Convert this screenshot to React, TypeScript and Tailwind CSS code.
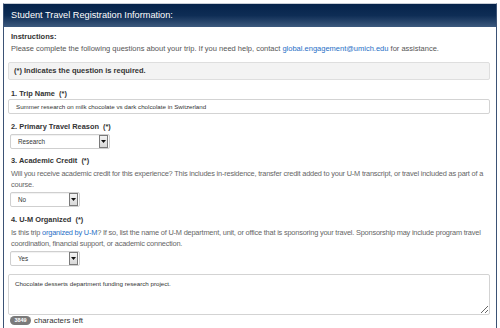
import { FC } from "react";

const font = "font-['Liberation_Sans',Arial,sans-serif]";

const FakeSelect: FC<{ value: string; width: string }> = ({ value, width }) => (
  <div
    className={`ml-[2px] mt-[2px] h-[15px] ${width} flex items-center border border-[#cfcfcf] rounded-[2px] bg-white shadow-[inset_0_1px_1px_rgba(0,0,0,0.06)]`}
  >
    <span className="flex-1 pl-[7px] text-[6.3px] text-[#333]">{value}</span>
    <span className="h-[13px] w-[9px] mr-[1px] flex items-center justify-center border border-[#7a7a7a] bg-gradient-to-b from-[#f4f4f4] to-[#d8d8d8]">
      <svg width="5" height="3" viewBox="0 0 5 3">
        <path d="M0 0 L5 0 L2.5 3 Z" fill="#111" />
      </svg>
    </span>
  </div>
);

const Heading: FC<{ text: string; mt: string }> = ({ text, mt }) => (
  <h3 className={`${mt} pl-[3px] h-[10px] leading-[10px] text-[7.4px] font-bold text-[#333]`}>
    {text}&nbsp;&nbsp;(*)
  </h3>
);

const App: FC = () => {
  return (
    <div className={`w-[500px] h-[328px] overflow-hidden bg-white pt-[3px] px-[3px] ${font}`}>
      <div className="h-full border-x border-[#3b5275] border-t border-t-[#c8ced6]">
        <header className="h-[23px] flex items-center pl-[7px] bg-gradient-to-b from-[#06234a] via-[#0e2d55] to-[#3d5a7e]">
          <h1 className="text-[9.2px] text-white">Student Travel Registration Information:</h1>
        </header>

        <div className="pl-[4px] pr-[6px]">
          <p className="mt-[4px] pl-[3px] leading-[12px] text-[7.5px] font-bold text-[#333]">Instructions:</p>
          <p className="pl-[3px] leading-[12px] text-[7.5px] text-[#555]">
            Please complete the following questions about your trip. If you need help, contact{" "}
            <a className="text-[#1f6fc6]">global.engagement@umich.edu</a> for assistance.
          </p>

          <div className="mt-[7px] h-[18px] flex items-center pl-[5px] bg-[#f3f3f3] border border-[#dedede] rounded-[2px]">
            <p className="text-[7.5px] font-bold text-[#333]">(*) Indicates the question is required.</p>
          </div>

          <Heading text="1. Trip Name" mt="mt-[9px]" />
          <div className="h-[15px] flex items-center pl-[7px] border border-[#d3d3d3] rounded-[2px] text-[6.2px] text-[#333]">
            Summer research on milk chocolate vs dark cholcolate in Switzerland
          </div>

          <Heading text="2. Primary Travel Reason" mt="mt-[8px]" />
          <FakeSelect value="Research" width="w-[100px]" />

          <Heading text="3. Academic Credit" mt="mt-[7px]" />
          <p className="mt-[2px] pl-[3px] pr-[2px] leading-[11px] text-[7.4px] tracking-[-0.2px] text-[#666]">
            Will you receive academic credit for this experience? This includes in-residence, transfer credit added
            to your U-M transcript, or travel included as part of a course.
          </p>
          <FakeSelect value="No" width="w-[70px]" />

          <Heading text="4. U-M Organized" mt="mt-[8px]" />
          <p className="mt-[2px] pl-[3px] pr-[2px] leading-[11px] text-[7.4px] tracking-[-0.2px] text-[#666]">
            Is this trip <a className="text-[#1f6fc6]">organized by U-M</a>? If so, list the name of U-M department,
            unit, or office that is sponsoring your travel. Sponsorship may include program travel coordination,
            financial support, or academic connection.
          </p>
          <FakeSelect value="Yes" width="w-[70px]" />

          <textarea
            readOnly
            defaultValue="Chocolate desserts department funding research project."
            className="mt-[8px] block w-full h-[41px] px-[6px] py-[4px] border border-[#d3d3d3] rounded-[2px] text-[6.2px] leading-[9px] text-[#333] outline-none"
          />
          <div className="h-[11px] flex items-center gap-[3px] pl-[2px]">
            <span className="h-[9px] w-[21px] flex items-center justify-center rounded-full bg-[#7a7a7a] text-[5.5px] font-bold text-white">
              3849
            </span>
            <span className="text-[7.8px] text-[#333]">characters left</span>
          </div>
        </div>
      </div>
    </div>
  );
};

export default App;
